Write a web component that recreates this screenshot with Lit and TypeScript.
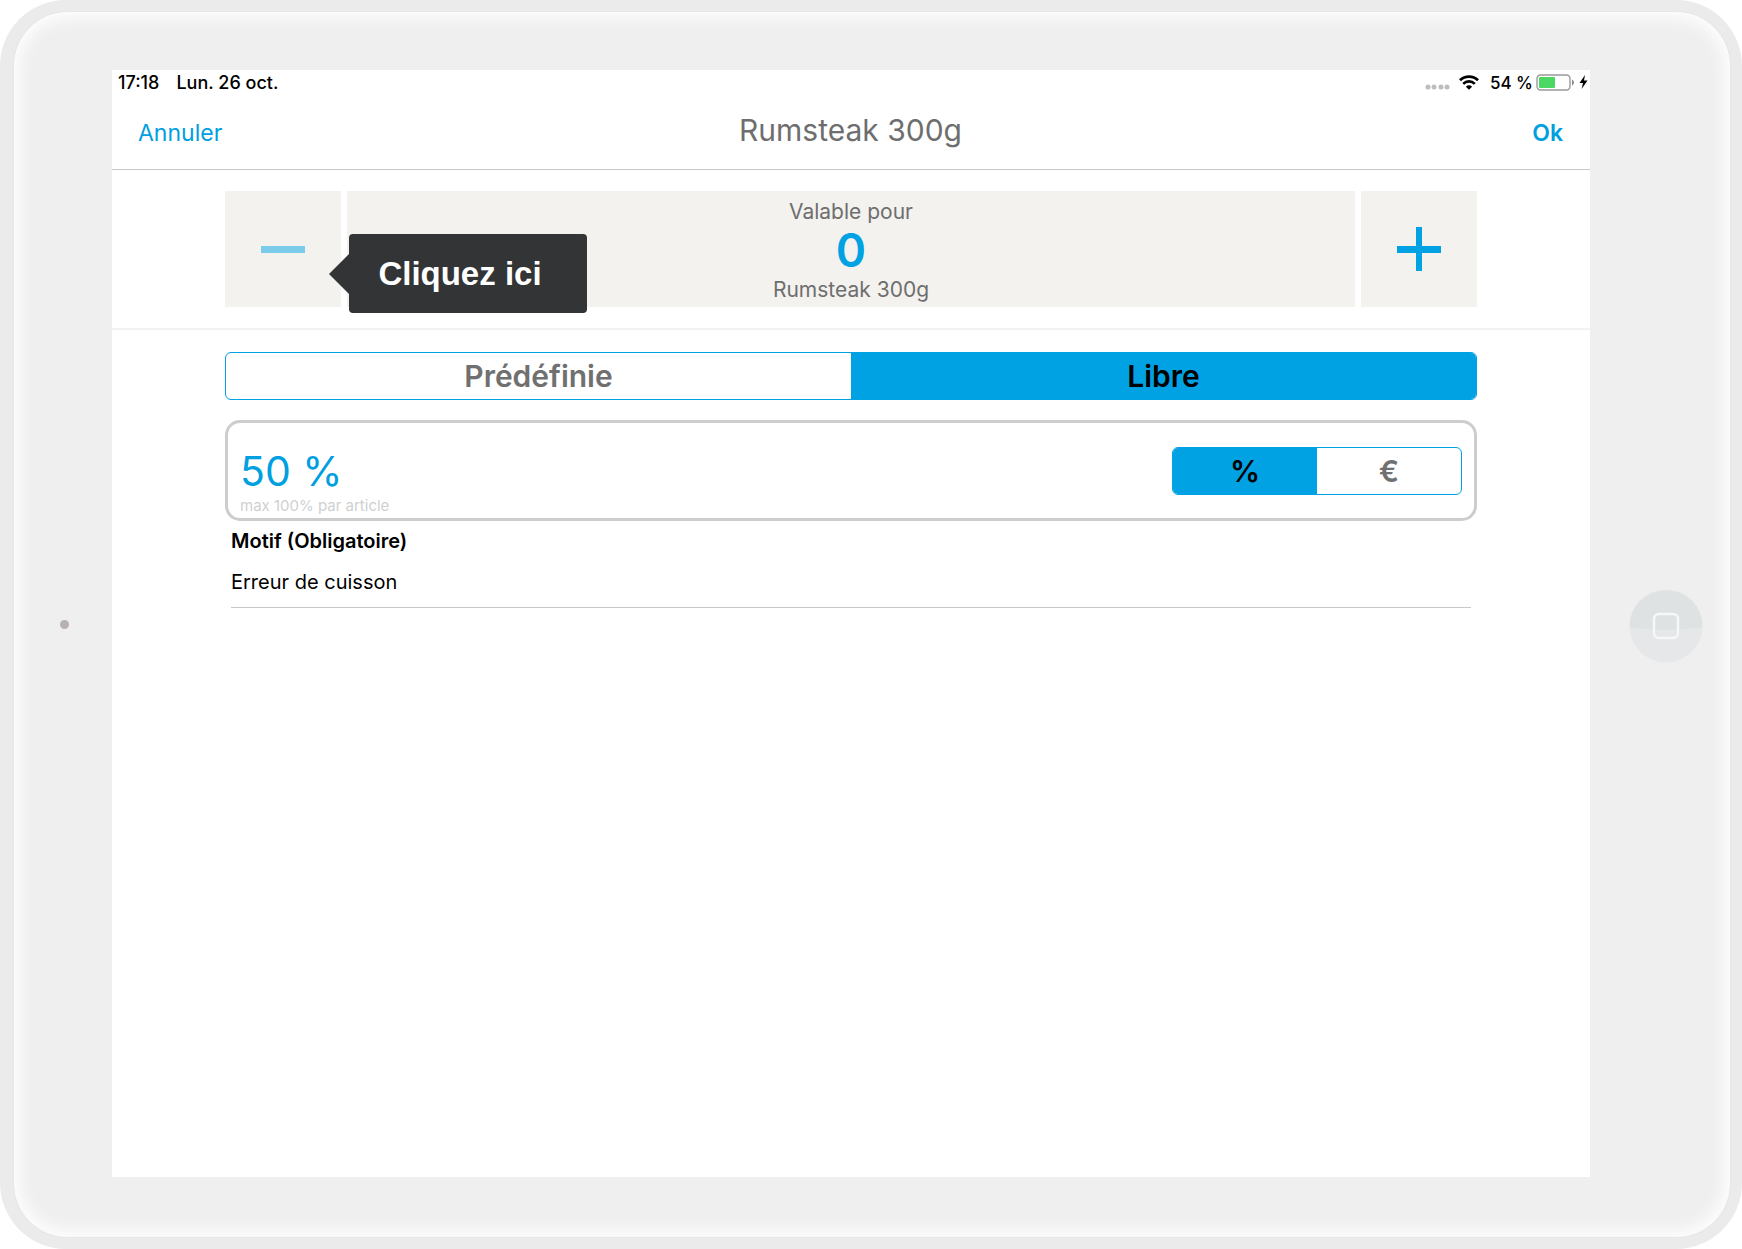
import { LitElement, html, css, svg } from "lit";
import { customElement, property, state } from "lit/decorators.js";

interface Option {
  value: string;
  label: string;
}

const wifiIcon = svg`
  <path d="M1 5.2 A13 13 0 0 1 19 5.2" fill="none" stroke="#000" stroke-width="2.8"/>
  <path d="M4.2 8.8 A8.2 8.2 0 0 1 15.8 8.8" fill="none" stroke="#000" stroke-width="2.6"/>
  <path d="M10 14.8 L6.9 11.7 A4.7 4.7 0 0 1 13.1 11.7 Z" fill="#000"/>`;

@customElement("segmented-control")
export class SegmentedControl extends LitElement {
  static styles = css`
    :host {
      display: block;
    }
    .group {
      display: grid;
      grid-auto-flow: column;
      grid-auto-columns: 1fr;
      height: 48px;
      box-sizing: border-box;
      margin: 0;
      padding: 0;
      border: 1px solid #00a2e3;
      border-radius: 6px;
      overflow: hidden;
    }
    .segment {
      display: flex;
      align-items: center;
      justify-content: center;
      color: #707070;
      font-size: 30px;
      font-weight: 600;
      cursor: pointer;
    }
    .segment.selected {
      background: #00a2e3;
      color: #000;
    }
    .radio {
      appearance: none;
      width: 0;
      height: 0;
      margin: 0;
    }
  `;

  @property({ attribute: false }) options: Option[] = [];
  @property() name = "";
  @property() value = "";

  render() {
    return html`
      <div class="group" role="radiogroup" aria-label=${this.name}>
        ${this.options.map(
          (o) => html`
            <label class="segment ${o.value === this.value ? "selected" : ""}">
              <input
                class="radio"
                type="radio"
                name=${this.name}
                .checked=${o.value === this.value}
                @change=${() => (this.value = o.value)}
              />
              ${o.label}
            </label>
          `
        )}
      </div>
    `;
  }
}

@customElement("status-bar")
export class StatusBar extends LitElement {
  static styles = css`
    :host {
      display: flex;
      justify-content: space-between;
      height: 25px;
      padding: 0 2px 0 6px;
      font-size: 17px;
      font-weight: 500;
      color: #000;
    }
    .side {
      display: flex;
      align-items: center;
    }
    .clock {
      gap: 17px;
      font-size: 18px;
    }
    .signal {
      margin: 9px 9px 0 0;
    }
    .wifi {
      margin: 0 11px 1px 0;
    }
    .battery {
      margin: 0 4px 1px 3px;
    }
    .bolt {
      margin-bottom: 1px;
    }
  `;

  render() {
    return html`
      <div class="side clock">
        <span>17:18</span>
        <span>Lun. 26 oct.</span>
      </div>
      <div class="side">
        <svg class="signal" width="25" height="6" viewBox="0 0 25 6" fill="#bdbdbd">
          ${[3, 9, 16, 22].map((x) => svg`<circle cx=${x} cy="3" r="2.5"/>`)}
        </svg>
        <svg class="wifi" width="20" height="15" viewBox="0 0 20 15">${wifiIcon}</svg>
        <span>54 %</span>
        <svg class="battery" width="39" height="17" viewBox="0 0 39 17">
          <rect x="1" y="1" width="33" height="15" rx="3.5" fill="#fff" stroke="#999" stroke-width="1.4"/>
          <rect x="3" y="3" width="16" height="11" rx="1" fill="#4bd964"/>
          <path d="M36 5.5 Q38 6.5 38 8.5 Q38 10.5 36 11.5 Z" fill="#888"/>
        </svg>
        <svg class="bolt" width="9" height="14" viewBox="0 0 9 14"><path d="M6 0 L0.5 8 H4 L2.6 14 L8.5 5.6 H5 Z" fill="#000"/></svg>
      </div>
    `;
  }
}

@customElement("app-root")
export class AppRoot extends LitElement {
  static styles = css`
    :host {
      display: block;
      font-family: Inter, "Liberation Sans", sans-serif;
      background: #fff;
    }
    .tablet {
      display: flex;
      box-sizing: border-box;
      min-height: 100vh;
      padding: 12px 12px 12px 14px;
      border-radius: 66px;
      background: #ebebeb;
    }
    .bezel {
      flex: 1;
      display: grid;
      grid-template-columns: 98px 1fr 140px;
      padding: 58px 0 60px;
      border-radius: 54px;
      background: #efefef;
      box-shadow: inset 0 0 18px 5px #fff, 0 0 2px #dedede;
    }
    .camera {
      align-self: center;
      justify-self: center;
      margin: 2px 0 0 3px;
      width: 9px;
      height: 9px;
      border-radius: 50%;
      background: #b9b1b1;
    }
    .home {
      align-self: center;
      justify-self: center;
      margin: 4px 0 0 12px;
      padding: 0;
      border: 0;
      background: none;
      line-height: 0;
    }
    .screen {
      background: #fff;
      min-width: 0;
    }
    .header {
      display: grid;
      grid-template-columns: 1fr auto 1fr;
      align-items: baseline;
      height: 74px;
      padding: 0 27px 0 26px;
      border-bottom: 1px solid #c8c8c8;
    }
    .title {
      margin: 0;
      color: #6e6e6e;
      font-size: 30px;
      font-weight: 400;
      line-height: 71px;
    }
    .action {
      justify-self: start;
      padding: 0;
      border: 0;
      background: none;
      color: #009fe0;
      font: 400 23px Inter, sans-serif;
    }
    .action.confirm {
      justify-self: end;
      font-weight: 600;
    }
    .quantity {
      position: relative;
      display: grid;
      grid-template-columns: 116px 1fr 116px;
      gap: 6px;
      padding: 21px 113px;
      border-bottom: 2px solid #f2f2f2;
    }
    .step,
    .amount {
      box-sizing: border-box;
      height: 116px;
      border: 0;
      padding: 0;
      background: #f3f2ee;
    }
    .step {
      display: grid;
      place-items: center;
    }
    .amount {
      display: flex;
      flex-direction: column;
      align-items: center;
      justify-content: center;
      padding-top: 2px;
      color: #6e6e6e;
      font-size: 21px;
      line-height: 31px;
    }
    .count {
      color: #00a2e3;
      font-size: 46px;
      font-weight: 600;
      line-height: 47px;
    }
    .tip {
      position: absolute;
      left: 237px;
      top: 64px;
      display: flex;
      align-items: center;
      justify-content: center;
      box-sizing: border-box;
      width: 238px;
      height: 79px;
      padding: 0 16px 0 0;
      border-radius: 4px;
      background: #333436;
      color: #fff;
      font: 700 33px "Liberation Sans", sans-serif;
    }
    .tip::before {
      content: "";
      position: absolute;
      right: 100%;
      top: 20px;
      border: 20px solid transparent;
      border-left-width: 0;
      border-right-color: #333436;
    }
    .form {
      display: flex;
      flex-direction: column;
      gap: 20px;
      padding: 22px 113px;
    }
    .discount {
      display: flex;
      align-items: center;
      justify-content: space-between;
      box-sizing: border-box;
      height: 101px;
      padding: 0 12px;
      border: 3px solid #cdcdcd;
      border-radius: 15px;
    }
    .value {
      display: flex;
      flex-direction: column;
      padding-top: 20px;
    }
    .rate {
      width: 300px;
      height: 50px;
      padding: 0;
      border: 0;
      background: none;
      color: #009fe0;
      font: 400 41px Inter, sans-serif;
    }
    .hint {
      color: #d0d0d0;
      font-size: 15px;
      line-height: 20px;
    }
    .unit {
      width: 290px;
    }
    .reason {
      display: flex;
      flex-direction: column;
      margin-top: -20px;
      padding: 0 6px;
      color: #000;
    }
    .label {
      font-size: 20px;
      font-weight: 600;
      line-height: 40px;
    }
    .field {
      box-sizing: border-box;
      height: 47px;
      padding: 0 0 4px;
      border: 0;
      border-bottom: 1px solid #c8c8c8;
      background: none;
      color: #000;
      font: 400 20px Inter, sans-serif;
    }
  `;

  @state() private count = 0;

  private step(delta: number) {
    this.count = Math.max(0, this.count + delta);
  }

  render() {
    return html`
      <div class="tablet">
        <div class="bezel">
          <div class="camera"></div>
          <main class="screen">
            <status-bar></status-bar>
            <header class="header">
              <button class="action">Annuler</button>
              <h1 class="title">Rumsteak 300g</h1>
              <button class="action confirm">Ok</button>
            </header>
            <section class="quantity">
              <button class="step" aria-label="Diminuer" @click=${() => this.step(-1)}>
                <svg width="44" height="44" viewBox="0 0 44 44"><path d="M0 19h44v7H0z" fill="#7bcbea"/></svg>
              </button>
              <div class="amount">
                <span>Valable pour</span>
                <output class="count">${this.count}</output>
                <span>Rumsteak 300g</span>
              </div>
              <button class="step" aria-label="Augmenter" @click=${() => this.step(1)}>
                <svg width="44" height="44" viewBox="0 0 44 44"><path d="M0 19h19V0h6v19h19v7H25v18H19V26H0z" fill="#00a2e3"/></svg>
              </button>
              <div class="tip" role="tooltip">Cliquez ici</div>
            </section>
            <section class="form">
              <segmented-control
                name="Remise"
                value="libre"
                .options=${[
                  { value: "predefinie", label: "Prédéfinie" },
                  { value: "libre", label: "Libre" },
                ]}
              ></segmented-control>
              <div class="discount">
                <div class="value">
                  <input class="rate" aria-label="Remise" aria-describedby="hint" value="50 %" />
                  <span class="hint" id="hint">max 100% par article</span>
                </div>
                <segmented-control
                  class="unit"
                  name="Unité"
                  value="%"
                  .options=${[
                    { value: "%", label: "%" },
                    { value: "€", label: "€" },
                  ]}
                ></segmented-control>
              </div>
              <div class="reason">
                <label class="label" for="reason">Motif (Obligatoire)</label>
                <input class="field" id="reason" value="Erreur de cuisson" />
              </div>
            </section>
          </main>
          <button class="home" aria-label="Accueil">
            <svg width="74" height="74" viewBox="0 0 74 74">
              <circle cx="37" cy="37" r="36.5" fill="#e5e7e8"/>
              <path d="M0.5 38 A36.5 36.5 0 0 1 73.5 38 Q37 44 0.5 38Z" fill="#dee2e3"/>
              <rect x="25" y="25" width="24" height="24" rx="5" fill="none" stroke="#f6f7f7" stroke-width="2.4"/>
            </svg>
          </button>
        </div>
      </div>
    `;
  }
}
